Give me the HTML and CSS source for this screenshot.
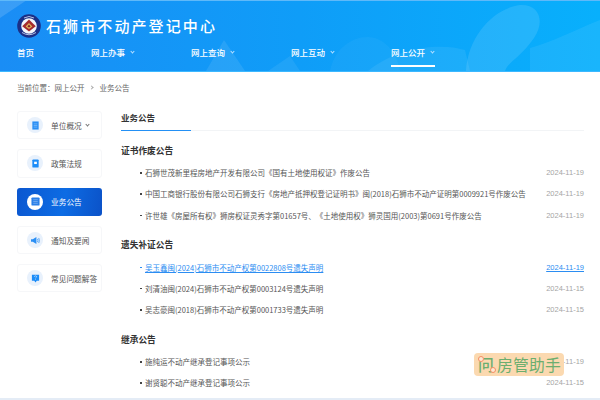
FILE: index.html
```html
<!DOCTYPE html>
<html lang="zh-CN">
<head>
<meta charset="utf-8">
<title>石狮市不动产登记中心</title>
<link rel="stylesheet" href="styles.css">
</head>
<body>
<header class="header">
  <svg class="header-art" viewBox="0 0 600 71" aria-hidden="true">
    <path d="M0 0H27L0 18Z" fill="#fff" opacity=".14"/>
    <path d="M224 40L245 71H206Z" fill="#fff" opacity=".09"/>
    <path d="M268 71L290 56L300 71Z" fill="#fff" opacity=".07"/>
    <path d="M330 71C335 45 358 33 375 38C392 44 398 60 400 71Z" fill="#fff" opacity=".04"/>
    <path d="M368 71C395 48 440 42 465 50L470 71Z" fill="#fff" opacity=".07"/>
    <path d="M466 71C468 35 495 8 520 5C540 4 545 22 534 38C520 58 508 62 505 71Z" fill="#fff" opacity=".11"/>
    <path d="M530 71V48C552 42 575 30 600 20V71Z" fill="#fff" opacity=".07"/>
  </svg>
  <div class="brand">
    <svg class="logo" viewBox="0 0 24 24" aria-hidden="true">
      <circle cx="12" cy="12" r="11.800" fill="#1b2f86"/>
      <circle cx="12" cy="12" r="7.800" fill="#f4f6fb"/>
      <path d="M12 5.400L18.800 12.200L12 17.400L5.200 12.200Z" fill="#a62b2e"/>
      <path d="M12 9L15.400 12.400L12 15L8.600 12.400Z" fill="#e4b45a"/>
      <path d="M12 10.600L13.600 12.400L12 13.600L10.400 12.400Z" fill="#8a2024"/>
      <path d="M5 18.500Q12 23 19 18.500" fill="none" stroke="#c9d2ec" stroke-width=".9"/>
      <path d="M7 4Q12 1 17 4" fill="none" stroke="#c9d2ec" stroke-width=".9"/>
    </svg>
    <h1 class="site-title">石狮市不动产登记中心</h1>
  </div>
  <nav class="nav">
    <a class="nav-item nav-home">首页</a>
    <a class="nav-item">网上办事<span class="chev"></span></a>
    <a class="nav-item">网上查询<span class="chev"></span></a>
    <a class="nav-item">网上互动<span class="chev"></span></a>
    <a class="nav-item nav-current">网上公开<span class="chev"></span></a>
  </nav>
</header>

<div class="crumbs">
  <span>当前位置：网上公开</span><span class="crumb-sep"></span><span>业务公告</span>
</div>

<main class="main">
  <aside class="side">
    <a class="side-item">
      <span class="side-icon">
        <svg viewBox="0 0 10 10"><path d="M1.500 .5h7v9h-7z" fill="#2a8ff5"/><path d="M3 3.200h4M3 5h4M3 6.800h4" stroke="#8cc4fb" stroke-width=".7"/></svg>
      </span>
      <span class="side-label">单位概况</span><span class="chev chev-dark"></span>
    </a>
    <a class="side-item">
      <span class="side-icon">
        <svg viewBox="0 0 10 10"><rect x="1.500" y=".5" width="7" height="9" rx="1" fill="#1b8cf8"/><rect x="3.500" y="3" width="3" height="2.600" fill="#fff"/></svg>
      </span>
      <span class="side-label">政策法规</span>
    </a>
    <a class="side-item side-active">
      <span class="side-icon">
        <svg viewBox="0 0 10 10"><rect x=".5" y=".5" width="9" height="9" rx="1" fill="#2a7fe8"/><path d="M2.500 3h5M2.500 5h5M2.500 7h5" stroke="#8fbdf4" stroke-width=".7"/></svg>
      </span>
      <span class="side-label">业务公告</span>
    </a>
    <a class="side-item">
      <span class="side-icon">
        <svg viewBox="0 0 10 10"><path d="M0 3.500h2L6 1v8L2 6.500H0z" fill="#2a8ff5"/><path d="M7.200 3.200Q8.200 5 7.200 6.800M8.600 2.200Q10 5 8.600 7.800" fill="none" stroke="#2a8ff5" stroke-width=".8"/></svg>
      </span>
      <span class="side-label">通知及要闻</span>
    </a>
    <a class="side-item">
      <span class="side-icon">
        <svg viewBox="0 0 10 10"><path d="M1 .8h8v6.600H6.400L5 9.400 3.600 7.400H1z" fill="#1b8cf8"/><path d="M3.800 3q.2-1 1.200-1t1.200 1q0 .6-.7 1-.5.3-.5.8" fill="none" stroke="#fff" stroke-width=".6"/><circle cx="5" cy="6" r=".4" fill="#fff"/></svg>
      </span>
      <span class="side-label">常见问题解答</span>
    </a>
  </aside>

  <section class="content">
    <div class="tabs"><span class="tab">业务公告</span></div>

    <h2 class="group-title">证书作废公告</h2>
    <ul class="list">
      <li class="row"><a class="row-title">石狮世茂新里程房地产开发有限公司《国有土地使用权证》作废公告</a><a class="row-date">2024-11-19</a></li>
      <li class="row"><a class="row-title">中国工商银行股份有限公司石狮支行《房地产抵押权登记证明书》闽(2018)石狮市不动产证明第0009921号作废公告</a><a class="row-date">2024-11-19</a></li>
      <li class="row"><a class="row-title">许世雄《房屋所有权》狮房权证灵秀字第01657号、《土地使用权》狮灵国用(2003)第0691号作废公告</a><a class="row-date">2024-11-19</a></li>
    </ul>

    <h2 class="group-title">遗失补证公告</h2>
    <ul class="list">
      <li class="row row-hover"><a class="row-title">吴玉鑫闽(2024)石狮市不动产权第0022808号遗失声明</a><a class="row-date">2024-11-19</a></li>
      <li class="row"><a class="row-title">刘清油闽(2024)石狮市不动产权第0003124号遗失声明</a><a class="row-date">2024-11-15</a></li>
      <li class="row"><a class="row-title">吴志豪闽(2018)石狮市不动产权第0001733号遗失声明</a><a class="row-date">2024-11-15</a></li>
    </ul>

    <h2 class="group-title">继承公告</h2>
    <ul class="list">
      <li class="row"><a class="row-title">施纯运不动产继承登记事项公示</a><a class="row-date">2024-11-19</a></li>
      <li class="row"><a class="row-title">谢贤聪不动产继承登记事项公示</a><a class="row-date">2024-11-15</a></li>
    </ul>
  </section>
</main>
<div class="footer-band"></div>

<div class="stamp">
  <span class="stamp-q">问<i class="ring ring-a"></i><i class="ring ring-b"></i></span><span class="stamp-text">房管助手</span>
</div>
</body>
</html>
```
FILE: styles.css
```css
* { box-sizing: border-box; }
html, body { margin: 0; padding: 0; }
body {
  width: 600px;
  height: 400px;
  overflow: hidden;
  position: relative;
  background: #fff;
  font-family: "Noto Sans CJK SC", "Liberation Sans", sans-serif;
  text-spacing-trim: space-all;
  color: #444;
}
a { color: inherit; text-decoration: none; }
h1, h2, ul { margin: 0; padding: 0; }
ul { list-style: none; }

.header {
  position: relative;
  height: 72px;
  background: linear-gradient(90deg, #1a8df5 0%, #0f9df8 50%, #08b0fc 100%);
  border-top: 1px solid #5fb9f9;
  border-bottom: 1px solid #3cb8ff;
  color: #fff;
  overflow: hidden;
}
.header-art { position: absolute; left: 0; top: -1px; width: 600px; height: 71px; }
.brand {
  position: relative;
  display: flex;
  align-items: center;
  height: 40px;
  padding: 10px 0 0 17px;
}
.logo { width: 24px; height: 24px; flex: none; }
.site-title {
  margin-left: 5px;
  font-size: 15px;
  font-weight: 500;
  line-height: 20px;
  letter-spacing: 2.100px;
}
.nav {
  position: relative;
  display: flex;
  padding-left: 17px;
}
.nav-item {
  display: flex;
  align-items: center;
  height: 22px;
  width: 100px;
  font-size: 8.500px;
  font-weight: 500;
  line-height: 16px;
}
.nav-home { width: 74px; }
.nav-current { position: relative; }
.nav-current::after {
  content: "";
  position: absolute;
  left: 0;
  top: 24px;
  width: 44px;
  height: 1.500px;
  background: #fff;
}
.nav { overflow: visible; }
.chev {
  width: 3px;
  height: 3px;
  margin-left: 6px;
  margin-top: -1px;
  border-right: .5px solid #b9e0ff;
  border-bottom: .5px solid #b9e0ff;
  transform: rotate(45deg);
}
.chev-dark { border-color: #777; margin-left: 4px; }

.crumbs {
  display: flex;
  align-items: center;
  height: 30px;
  padding-left: 17px;
  font-size: 7.500px;
  color: #666;
}
.crumb-sep {
  width: 3px;
  height: 3px;
  margin: 0 7px 0 5px;
  border-top: .7px solid #aaa;
  border-right: .7px solid #aaa;
  transform: rotate(45deg);
}

.main {
  display: grid;
  grid-template-columns: 85px 463px;
  column-gap: 19px;
  height: 296px;
  padding: 4px 0 0 17px;
}
.side {
  display: flex;
  flex-direction: column;
  gap: 10px;
  padding-top: 5px;
}
.side-item {
  display: flex;
  align-items: center;
  height: 28.300px;
  padding-left: 9px;
  border: 1px solid #f6f7f9;
  border-radius: 3px;
  font-size: 7.700px;
  color: #555;
}
.side-icon {
  display: flex;
  align-items: center;
  justify-content: center;
  flex: none;
  width: 16px;
  height: 16px;
  margin-right: 8px;
  border-radius: 50%;
  background: #e8f1fc;
}
.side-icon svg { width: 9px; height: 9px; }
.side-active {
  position: relative;
  border: 0;
  padding-left: 10px;
  color: #fff;
  background: linear-gradient(100deg, #0b57d0 0%, #0d6ce4 55%, #0b52c8 100%);
  overflow: hidden;
}
.side-active .side-icon { background: #fff; }

.tabs {
  height: 25px;
  border-bottom: 1px solid #f2f4f6;
}
.tab {
  display: block;
  width: 70px;
  height: 25px;
  font-size: 8.500px;
  font-weight: 700;
  line-height: 22px;
  color: #333;
  border-bottom: 1.500px solid #2390f5;
}
.group-title {
  height: 18px;
  margin-top: 10.700px;
  font-size: 8.700px;
  font-weight: 700;
  line-height: 18px;
  color: #333;
}
.tabs + .group-title { margin-top: 11px; }
.list { margin-top: 2.200px; }
.row {
  position: relative;
  display: flex;
  justify-content: space-between;
  align-items: center;
  height: 21.200px;
  padding-left: 24px;
  font-size: 7.500px;
  color: #555;
}
.row::before {
  content: "";
  position: absolute;
  left: 19px;
  top: 10px;
  width: 1.500px;
  height: 1.500px;
  background: #444;
}
.row-date {
  font-family: "Liberation Sans", sans-serif;
  color: #a5a5a5;
}
.row-hover, .row-hover .row-date { color: #2b8df2; }
.row-hover::before { background: #2b8df2; }
.row-hover a { text-decoration: underline; }

.footer-band { height: 4px; background: #e4ecf6; }

.stamp {
  position: absolute;
  left: 474px;
  top: 353px;
  display: flex;
  align-items: center;
  width: 90px;
  height: 23px;
  padding-left: 4px;
  border-radius: 4px;
  background: #fbd9b0;
  color: #6cae6f;
  font-size: 15.800px;
  line-height: 23px;
}
.stamp-q { position: relative; width: 19px; font-weight: 500; }
.stamp-text { letter-spacing: .2px; }
.ring {
  position: absolute;
  width: 6px;
  height: 6px;
  border: 1.500px solid #f58d62;
  border-radius: 50%;
  background: #fde9d3;
}
.ring-a { left: 0; top: 3px; }
.ring-b { left: 12px; top: 14px; }
```
